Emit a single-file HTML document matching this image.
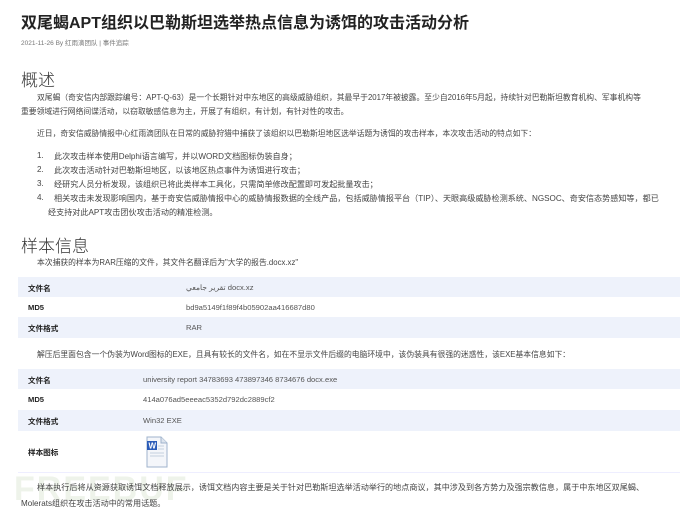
<!DOCTYPE html>
<html><head><meta charset="utf-8"><style>
body{margin:0;width:690px;height:520px;background:#fff;position:relative;overflow:hidden;font-family:"Liberation Sans","Noto Sans CJK SC",sans-serif;color:#333}
.a{position:absolute;white-space:nowrap}
.p{font-size:7.8px;color:#444}
.l{font-size:8.1px;color:#444}
.h{font-size:17px;color:#333;font-weight:300}
.row{position:absolute;left:18px;width:662px;font-size:7.6px}
.row b{position:absolute;left:10px;font-weight:bold;color:#222}
.row span{position:absolute;color:#555}
</style></head><body>
<div class="a" style="left:21px;top:9px;font-size:16px;font-weight:bold;color:#222">双尾蝎APT组织以巴勒斯坦选举热点信息为诱饵的攻击活动分析</div>
<div class="a" style="left:21px;top:37px;font-size:6.5px;color:#777">2021-11-26 By 红雨滴团队 | 事件追踪</div>
<div class="a h" style="left:21px;top:66px">概述</div>
<div class="a p" style="left:37px;top:92px">双尾蝎（奇安信内部跟踪编号：APT-Q-63）是一个长期针对中东地区的高级威胁组织，其最早于2017年被披露。至少自2016年5月起，持续针对巴勒斯坦教育机构、军事机构等</div>
<div class="a p" style="left:21px;top:106px">重要领域进行网络间谍活动，以窃取敏感信息为主，开展了有组织，有计划，有针对性的攻击。</div>
<div class="a p" style="left:37px;top:128px">近日，奇安信威胁情报中心红雨滴团队在日常的威胁狩猎中捕获了该组织以巴勒斯坦地区选举话题为诱饵的攻击样本，本次攻击活动的特点如下：</div>
<div class="a l" style="left:37px;top:151px">1.</div><div class="a l" style="left:54px;top:151px">此次攻击样本使用Delphi语言编写，并以WORD文档图标伪装自身；</div>
<div class="a l" style="left:37px;top:165px">2.</div><div class="a l" style="left:54px;top:165px">此次攻击活动针对巴勒斯坦地区，以该地区热点事件为诱饵进行攻击；</div>
<div class="a l" style="left:37px;top:179px">3.</div><div class="a l" style="left:54px;top:179px">经研究人员分析发现，该组织已将此类样本工具化，只需简单修改配置即可发起批量攻击；</div>
<div class="a l" style="left:37px;top:193px">4.</div><div class="a l" style="left:54px;top:193px">相关攻击未发现影响国内，基于奇安信威胁情报中心的威胁情报数据的全线产品，包括威胁情报平台（TIP）、天眼高级威胁检测系统、NGSOC、奇安信态势感知等，都已</div>
<div class="a l" style="left:48px;top:207px">经支持对此APT攻击团伙攻击活动的精准检测。</div>
<div class="a h" style="left:21px;top:232px">样本信息</div>
<div class="a p" style="left:37px;top:257px">本次捕获的样本为RAR压缩的文件，其文件名翻译后为"大学的报告.docx.xz"</div>
<div class="row" style="top:277px;height:20px;background:#eef2fb"><b style="top:6px">文件名</b><span style="left:168px;top:6px">تقرير جامعي docx.xz</span></div>
<div class="row" style="top:297px;height:20px;background:#fff"><b style="top:6px">MD5</b><span style="left:168px;top:6px">bd9a5149f1f89f4b05902aa416687d80</span></div>
<div class="row" style="top:317px;height:21px;background:#eef2fb"><b style="top:6px">文件格式</b><span style="left:168px;top:6px">RAR</span></div>
<div class="a p" style="left:37px;top:349px">解压后里面包含一个伪装为Word图标的EXE，且具有较长的文件名，如在不显示文件后缀的电脑环境中，该伪装具有很强的迷惑性，该EXE基本信息如下：</div>
<div class="row" style="top:369px;height:20px;background:#eef2fb"><b style="top:6px">文件名</b><span style="left:125px;top:6px">university report 34783693 473897346 8734676 docx.exe</span></div>
<div class="row" style="top:389px;height:21px;background:#fff"><b style="top:6px">MD5</b><span style="left:125px;top:6px">414a076ad5eeeac5352d792dc2889cf2</span></div>
<div class="row" style="top:410px;height:21px;background:#eef2fb"><b style="top:6px">文件格式</b><span style="left:125px;top:6px">Win32 EXE</span></div>
<div class="row" style="top:431px;height:41px;background:#fff;border-bottom:1px solid #eef"><b style="top:16px">样本图标</b></div>
<svg class="a" style="left:145px;top:436px" width="24" height="32" viewBox="0 0 24 32"><path d="M2 1h14l6 6v24H2z" fill="#f4f6fa" stroke="#9fb3cc"/><path d="M16 1v6h6" fill="#dde4ee" stroke="#9fb3cc"/><rect x="2" y="5" width="10" height="9" fill="#2a5bb8"/><text x="3.5" y="12.5" font-size="8" font-weight="bold" fill="#fff" font-family="Liberation Sans">W</text><path d="M13 10h6M13 13h6M5 17h14M5 20h14" stroke="#c5d0de" stroke-width="1"/></svg>
<div class="a" style="left:14px;top:470px;font-size:34px;font-weight:bold;color:#eef3ea;letter-spacing:2px">FREEBUF</div>
<div class="a l" style="left:37px;top:482px">样本执行后将从资源获取诱饵文档释放展示，诱饵文档内容主要是关于针对巴勒斯坦选举活动举行的地点商议，其中涉及到各方势力及强宗教信息，属于中东地区双尾蝎、</div>
<div class="a l" style="left:21px;top:498px">Molerats组织在攻击活动中的常用话题。</div>
</body></html>
